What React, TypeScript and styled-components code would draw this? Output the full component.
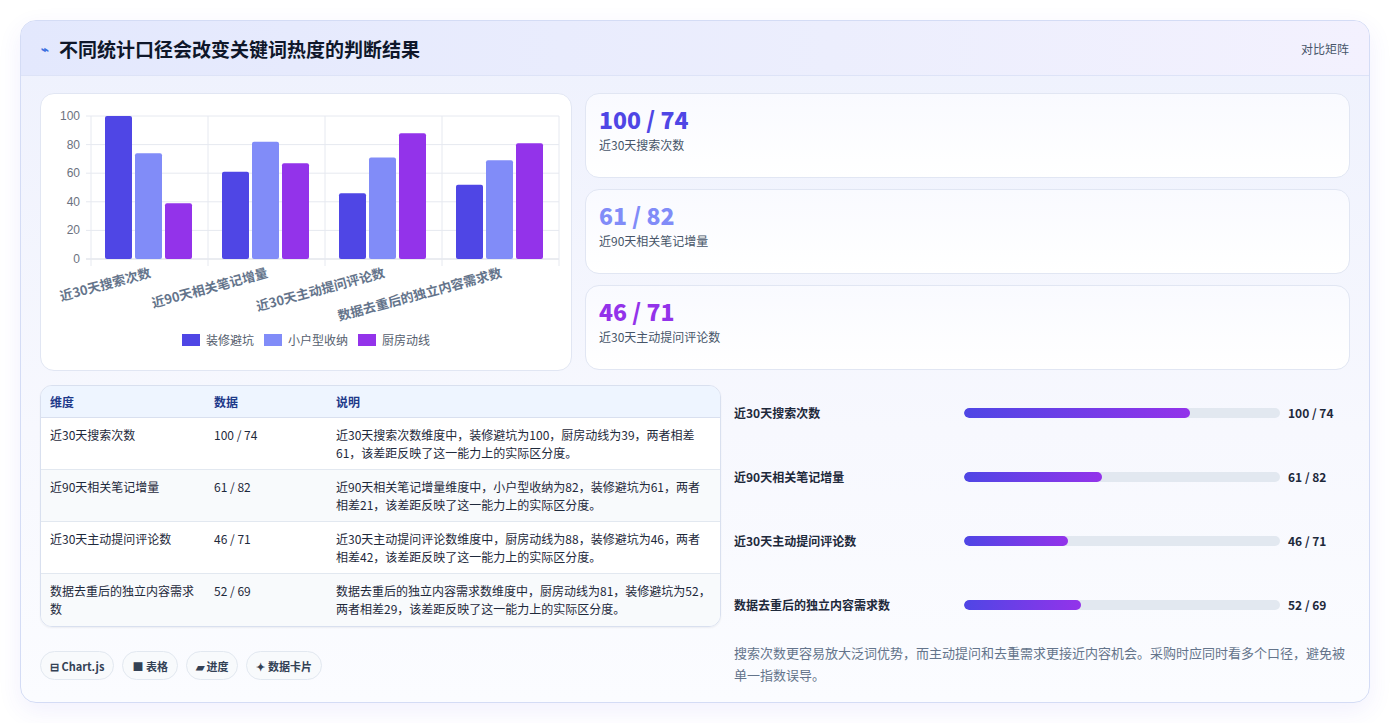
import React from 'react';
import styled, { createGlobalStyle } from 'styled-components';

const GlobalStyle = createGlobalStyle`
  html, body {
    margin: 0;
    padding: 0;
    background: #ffffff;
    font-family: "Noto Sans CJK SC", "Noto Sans", sans-serif;
  }
  * { box-sizing: border-box; }
`;

const Page = styled.div`
  padding: 20px 20px 20px 20px;
  width: 1390px;
  height: 723px;
`;

const Panel = styled.div`
  width: 1350px;
  height: 683px;
  border: 1px solid #d4dcf5;
  border-radius: 16px;
  overflow: hidden;
  background: linear-gradient(180deg, #eef1fd 0%, #f7f8fe 60%, #fbfcff 100%);
  box-shadow: 0 8px 24px rgba(79, 70, 229, 0.08);
  display: flex;
  flex-direction: column;
`;

const Header = styled.div`
  height: 55px;
  display: flex;
  align-items: center;
  justify-content: space-between;
  padding: 0 20px;
  background: linear-gradient(90deg, #e3e8fd 0%, #eceefd 60%, #f3f1fe 100%);
  border-bottom: 1px solid #dde3f7;
`;

const Title = styled.h1`
  margin: 0;
  display: flex;
  align-items: center;
  gap: 10px;
  font-size: 19px;
  font-weight: 700;
  color: #0f172a;
`;

const TitleIcon = styled.span`
  color: #3b6fe0;
  font-size: 13px;
  font-weight: 700;
`;

const HeaderTag = styled.span`
  font-size: 12px;
  color: #475569;
`;

const Body = styled.div`
  flex: 1;
  padding: 17px 19px 0 19px;
  display: flex;
  flex-direction: column;
  gap: 14px;
`;

const TopRow = styled.div`
  display: grid;
  grid-template-columns: 532px 1fr;
  gap: 13px;
`;

const ChartCard = styled.div`
  height: 278px;
  background: #ffffff;
  border: 1px solid #e1e6f3;
  border-radius: 14px;
  display: flex;
  flex-direction: column;
  align-items: center;
`;

const Legend = styled.div`
  display: flex;
  gap: 10px;
  font-size: 12px;
  color: #555e6e;
  margin-top: -3px;
`;

const LegendItem = styled.div`
  display: flex;
  align-items: center;
  gap: 6px;
`;

const Swatch = styled.span<{ $c: string }>`
  width: 18px;
  height: 12px;
  background: ${p => p.$c};
`;

const Stats = styled.div`
  display: flex;
  flex-direction: column;
  gap: 11px;
`;

const StatCard = styled.div`
  height: 85px;
  background: linear-gradient(180deg, #f9faff 0%, #ffffff 100%);
  border: 1px solid #e1e6f3;
  border-radius: 14px;
  padding: 10px 13px;
`;

const StatValue = styled.div<{ $c: string }>`
  font-size: 23px;
  font-weight: 800;
  line-height: 30px;
  color: ${p => p.$c};
`;

const StatLabel = styled.div`
  font-size: 12px;
  color: #475569;
  margin-top: 2px;
`;

const BottomRow = styled.div`
  display: grid;
  grid-template-columns: 681px 1fr;
  gap: 13px;
`;

const LeftCol = styled.div`
  display: flex;
  flex-direction: column;
  gap: 24px;
`;

const Table = styled.table`
  width: 100%;
  border-collapse: separate;
  border-spacing: 0;
  border: 1px solid #d9e0ef;
  border-radius: 12px;
  overflow: hidden;
  font-size: 12px;
  box-shadow: 0 1px 2px rgba(15, 23, 42, 0.06);
`;

const Th = styled.th<{ $w?: number }>`
  text-align: left;
  font-weight: 700;
  color: #1e3a8a;
  background: #eef5ff;
  height: 32px;
  padding: 0 9px;
  border-bottom: 1px solid #d9e0ef;
  width: ${p => (p.$w ? `${p.$w}px` : 'auto')};
`;

const Tr = styled.tr<{ $alt: boolean }>`
  background: ${p => (p.$alt ? '#f8fafc' : '#ffffff')};
`;

const Td = styled.td<{ $last: boolean }>`
  vertical-align: top;
  color: #1e293b;
  padding: 8px 9px 6px;
  line-height: 18px;
  height: 52px;
  border-bottom: ${p => (p.$last ? 'none' : '1px solid #e2e8f0')};
`;

const Chips = styled.div`
  display: flex;
  gap: 8px;
`;

const Chip = styled.span`
  height: 29px;
  padding: 0 9px;
  border-radius: 15px;
  border: 1px solid #e2e8f0;
  background: #f8fafc;
  font-size: 11px;
  font-weight: 700;
  color: #334155;
  display: flex;
  align-items: center;
  gap: 3px;
`;

const RightCol = styled.div`
  display: flex;
  flex-direction: column;
`;

const Bars = styled.div`
  display: flex;
  flex-direction: column;
  padding-top: 19px;
  gap: 52px;
`;

const BarRow = styled.div`
  display: grid;
  grid-template-columns: 230px 316px 1fr;
  align-items: center;
  height: 12px;
`;

const BarLabel = styled.span`
  font-size: 12px;
  font-weight: 600;
  color: #1e293b;
`;

const Track = styled.div`
  height: 10px;
  border-radius: 5px;
  background: #e2e8f0;
  overflow: hidden;
`;

const Fill = styled.div`
  height: 100%;
  border-radius: 5px;
  background: linear-gradient(90deg, #4f46e5 0%, #9333ea 100%);
`;

const BarValue = styled.span`
  font-size: 12px;
  font-weight: 700;
  color: #1e293b;
  padding-left: 8px;
`;

const Note = styled.p`
  margin: 34px 0 0;
  font-size: 13px;
  line-height: 22px;
  color: #64748b;
`;

const COLORS = ['#4f46e5', '#818cf8', '#9333ea'];
const SERIES = ['装修避坑', '小户型收纳', '厨房动线'];
const DIMS = ['近30天搜索次数', '近90天相关笔记增量', '近30天主动提问评论数', '数据去重后的独立内容需求数'];
const DATA = [
  [100, 74, 39],
  [61, 82, 67],
  [46, 71, 88],
  [52, 69, 81],
];

const ROWS = [
  ['近30天搜索次数', '100 / 74', '近30天搜索次数维度中，装修避坑为100，厨房动线为39，两者相差61，该差距反映了这一能力上的实际区分度。'],
  ['近90天相关笔记增量', '61 / 82', '近90天相关笔记增量维度中，小户型收纳为82，装修避坑为61，两者相差21，该差距反映了这一能力上的实际区分度。'],
  ['近30天主动提问评论数', '46 / 71', '近30天主动提问评论数维度中，厨房动线为88，装修避坑为46，两者相差42，该差距反映了这一能力上的实际区分度。'],
  ['数据去重后的独立内容需求数', '52 / 69', '数据去重后的独立内容需求数维度中，厨房动线为81，装修避坑为52，两者相差29，该差距反映了这一能力上的实际区分度。'],
];

const PROGRESS = [
  { label: '近30天搜索次数', value: '100 / 74', pct: 71.5 },
  { label: '近90天相关笔记增量', value: '61 / 82', pct: 43.7 },
  { label: '近30天主动提问评论数', value: '46 / 71', pct: 33 },
  { label: '数据去重后的独立内容需求数', value: '52 / 69', pct: 37 },
];

const BarChart = () => {
  const left = 50;
  const right = 518;
  const y0 = 165;
  const y100 = 22;
  const groupW = (right - left) / 4;
  const scale = (y0 - y100) / 100;
  return (
    <svg width="531" height="240" viewBox="0 0 531 240">
      {[0, 20, 40, 60, 80, 100].map(t => {
        const y = y0 - t * scale;
        return (
          <g key={t}>
            <line x1={left - 5} x2={right} y1={y} y2={y} stroke={t === 0 ? '#d5d9e2' : '#e6e9f0'} />
            <text x={left - 11} y={y + 4} textAnchor="end" fontSize="12" fill="#6b7280" fontFamily="Liberation Sans, sans-serif">{t}</text>
          </g>
        );
      })}
      {[0, 1, 2, 3, 4].map(i => (
        <line key={i} x1={left + i * groupW} x2={left + i * groupW} y1={y100} y2={y0 + 7} stroke="#e6e9f0" />
      ))}
      {DATA.map((g, gi) =>
        g.map((v, si) => {
          const x = left + gi * groupW + 14 + si * 30;
          const h = v * scale;
          return <rect key={`${gi}-${si}`} x={x} y={y0 - h} width={27} height={h} rx={2} fill={COLORS[si]} />;
        })
      )}
      {DIMS.map((d, i) => {
        const cx = left + i * groupW + groupW / 2 + 2;
        return (
          <text key={d} x={cx} y={y0 + 18} textAnchor="end" fontSize="13" fontWeight="600" fill="#64748b" transform={`rotate(-15 ${cx} ${y0 + 18})`}>
            {d}
          </text>
        );
      })}
    </svg>
  );
};

export default function App() {
  return (
    <Page>
      <GlobalStyle />
      <Panel>
        <Header>
          <Title><TitleIcon>⌁</TitleIcon>不同统计口径会改变关键词热度的判断结果</Title>
          <HeaderTag>对比矩阵</HeaderTag>
        </Header>
        <Body>
          <TopRow>
            <ChartCard>
              <BarChart />
              <Legend>
                {SERIES.map((s, i) => (
                  <LegendItem key={s}><Swatch $c={COLORS[i]} />{s}</LegendItem>
                ))}
              </Legend>
            </ChartCard>
            <Stats>
              <StatCard>
                <StatValue $c="#4f46e5">100 / 74</StatValue>
                <StatLabel>近30天搜索次数</StatLabel>
              </StatCard>
              <StatCard>
                <StatValue $c="#818cf8">61 / 82</StatValue>
                <StatLabel>近90天相关笔记增量</StatLabel>
              </StatCard>
              <StatCard>
                <StatValue $c="#9333ea">46 / 71</StatValue>
                <StatLabel>近30天主动提问评论数</StatLabel>
              </StatCard>
            </Stats>
          </TopRow>
          <BottomRow>
            <LeftCol>
              <Table>
                <thead>
                  <tr>
                    <Th $w={164}>维度</Th>
                    <Th $w={122}>数据</Th>
                    <Th>说明</Th>
                  </tr>
                </thead>
                <tbody>
                  {ROWS.map((r, i) => (
                    <Tr key={r[0]} $alt={i % 2 === 1}>
                      {r.map((c, j) => (
                        <Td key={j} $last={i === ROWS.length - 1}>{c}</Td>
                      ))}
                    </Tr>
                  ))}
                </tbody>
              </Table>
              <Chips>
                <Chip>⊟ Chart.js</Chip>
                <Chip>■ 表格</Chip>
                <Chip>▰ 进度</Chip>
                <Chip>✦ 数据卡片</Chip>
              </Chips>
            </LeftCol>
            <RightCol>
              <Bars>
                {PROGRESS.map(p => (
                  <BarRow key={p.label}>
                    <BarLabel>{p.label}</BarLabel>
                    <Track><Fill style={{ width: `${p.pct}%` }} /></Track>
                    <BarValue>{p.value}</BarValue>
                  </BarRow>
                ))}
              </Bars>
              <Note>搜索次数更容易放大泛词优势，而主动提问和去重需求更接近内容机会。采购时应同时看多个口径，避免被单一指数误导。</Note>
            </RightCol>
          </BottomRow>
        </Body>
      </Panel>
    </Page>
  );
}
